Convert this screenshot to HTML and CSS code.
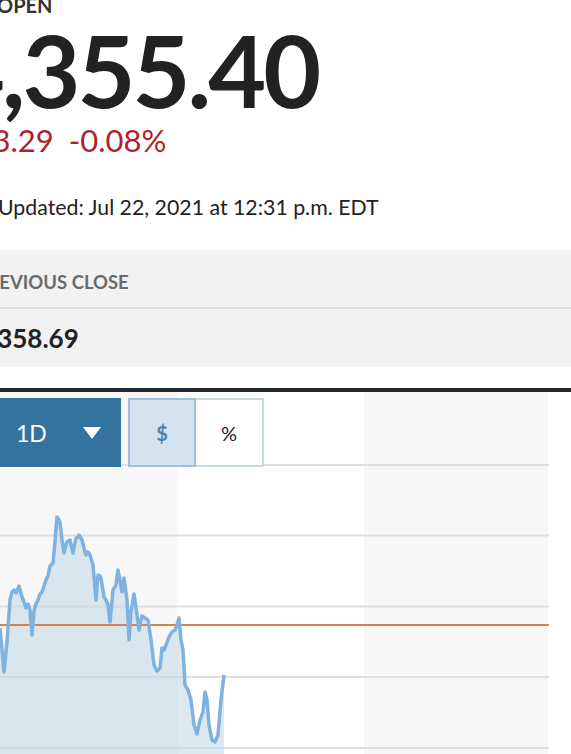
FILE: index.html
```html
<!DOCTYPE html>
<html lang="en">
<head>
<meta charset="utf-8">
<title>Quote</title>
<link rel="stylesheet" href="styles.css">
</head>
<body>
<section class="quote">
  <div class="status">OPEN</div>
  <div class="price">4,355.40</div>
  <div class="change"><span>-3.29</span><span>-0.08%</span></div>
  <div class="updated">Updated: Jul 22, 2021 at 12:31 p.m. EDT</div>
</section>
<section class="prev">
  <div class="prev-label">PREVIOUS CLOSE</div>
  <div class="prev-value">4,358.69</div>
</section>
<section class="chart">
  <svg class="chart-svg" width="571" height="362" viewBox="0 0 571 362">
    <rect x="0" y="0" width="178" height="362" fill="#f7f7f7"/>
    <rect x="364" y="0" width="184" height="362" fill="#f7f7f7"/>
    <g stroke="#dfdfdf" stroke-width="2">
      <line x1="0" y1="73" x2="549" y2="73"/>
      <line x1="0" y1="143.5" x2="549" y2="143.5"/>
      <line x1="0" y1="214.5" x2="549" y2="214.5"/>
      <line x1="0" y1="285" x2="549" y2="285"/>
      <line x1="0" y1="356" x2="549" y2="356"/>
    </g>
    <path fill="#c5dbe6" fill-opacity="0.6" d="M0,236 L4,280 L7,250 L10,208 L12,200 L14,198 L16,201 L19,194 L22,205 L24,210 L26,216 L28,212 L30,218 L32,243 L34,219 L36,212 L38,208 L40,202 L42,200 L44,194 L46,188 L48,184 L50,174 L53,171 L55,150 L57,125 L59,128 L60,130 L62,148 L64,161 L66,152 L67,150 L70,148 L73,161 L76,146 L78,145 L79,143 L82,148 L84,156 L86,163 L88,160 L90,163 L93,173 L96,208 L98,183 L100,184 L101,186 L104,205 L106,208 L108,213 L110,230 L112,210 L113,198 L116,193 L118,178 L120,188 L122,200 L124,186 L127,208 L129,248 L131,220 L134,202 L136,216 L139,238 L141,228 L142,224 L145,226 L148,228 L151,248 L154,273 L157,279 L160,276 L162,256 L164,258 L166,253 L169,245 L172,240 L175,238 L177,233 L179,226 L181,248 L183,258 L185,293 L188,298 L191,308 L194,333 L197,342 L200,328 L203,320 L205,300 L207,308 L209,333 L212,348 L215,350 L218,343 L221,308 L224,283 L224,362 L0,362 Z"/>
    <line x1="0" y1="233" x2="549" y2="233" stroke="#d4834e" stroke-width="2"/>
    <path fill="none" stroke="#7fb2de" stroke-width="3.5" stroke-linejoin="round" d="M0,236 L4,280 L7,250 L10,208 L12,200 L14,198 L16,201 L19,194 L22,205 L24,210 L26,216 L28,212 L30,218 L32,243 L34,219 L36,212 L38,208 L40,202 L42,200 L44,194 L46,188 L48,184 L50,174 L53,171 L55,150 L57,125 L59,128 L60,130 L62,148 L64,161 L66,152 L67,150 L70,148 L73,161 L76,146 L78,145 L79,143 L82,148 L84,156 L86,163 L88,160 L90,163 L93,173 L96,208 L98,183 L100,184 L101,186 L104,205 L106,208 L108,213 L110,230 L112,210 L113,198 L116,193 L118,178 L120,188 L122,200 L124,186 L127,208 L129,248 L131,220 L134,202 L136,216 L139,238 L141,228 L142,224 L145,226 L148,228 L151,248 L154,273 L157,279 L160,276 L162,256 L164,258 L166,253 L169,245 L172,240 L175,238 L177,233 L179,226 L181,248 L183,258 L185,293 L188,298 L191,308 L194,333 L197,342 L200,328 L203,320 L205,300 L207,308 L209,333 L212,348 L215,350 L218,343 L221,308 L224,283"/>
  </svg>
  <div class="toolbar">
    <button class="range" type="button"><span>1D</span>
      <svg class="caret" width="18" height="12" viewBox="0 0 18 12"><path d="M0,0 L18,0 L9,12 Z" fill="#fff"/></svg>
    </button>
    <div class="toggle">
      <button class="tg tg-active" type="button">$</button>
      <button class="tg" type="button">%</button>
    </div>
  </div>
</section>
</body>
</html>
```
FILE: styles.css
```css
html, body {
  margin: 0;
  padding: 0;
  background: #fff;
  overflow: hidden;
}
body {
  width: 571px;
  height: 754px;
  font-family: Lato, "Open Sans", sans-serif;
  color: #222;
}
.quote {
  margin-left: -24px;
  display: flex;
  flex-direction: column;
  align-items: flex-start;
}
.status {
  margin-top: -7px;
  margin-left: 21px;
  font-size: 20px;
  line-height: 24px;
  font-weight: 700;
  color: #333;
}
.price {
  margin-top: 2px;
  margin-left: -29px;
  font-size: 100px;
  line-height: 100px;
  font-weight: 700;
  letter-spacing: -3px;
  color: #222;
}
.change {
  display: flex;
  gap: 15px;
  margin-top: 4px;
  margin-left: 5px;
  font-size: 31px;
  line-height: 34px;
  color: #b31e2b;
}
.updated {
  margin-top: 37px;
  margin-left: 22px;
  font-size: 21.3px;
  line-height: 26px;
  color: #222;
}
.prev {
  margin-top: 30px;
  margin-left: -24px;
  background: #f2f2f2;
  display: flex;
  flex-direction: column;
}
.prev-label {
  height: 59px;
  box-sizing: border-box;
  padding-top: 7px;
  display: flex;
  align-items: center;
  font-size: 18.5px;
  font-weight: 700;
  color: #6b6b6b;
  border-bottom: 2px solid #dcdcdc;
}
.prev-value {
  height: 58px;
  display: flex;
  align-items: center;
  font-size: 26px;
  font-weight: 700;
  color: #222;
}
.chart {
  margin-top: 21px;
  border-top: 4px solid #24292c;
  position: relative;
}
.chart-svg {
  display: block;
}
.toolbar {
  position: absolute;
  top: 6px;
  left: 0;
  display: flex;
  gap: 7px;
}
.range {
  width: 121px;
  height: 69px;
  border: 0;
  margin: 0;
  padding: 0 20px 0 16px;
  background: #35739f;
  color: #fff;
  font-family: Lato, sans-serif;
  font-size: 23px;
  display: flex;
  align-items: center;
  justify-content: space-between;
}
.caret {
  display: block;
}
.toggle {
  display: flex;
}
.tg {
  width: 68px;
  height: 69px;
  margin: 0;
  padding: 0;
  border: 2px solid #c9d9e6;
  background: #fff;
  color: #222;
  font-family: Lato, sans-serif;
  font-size: 20px;
}
.tg + .tg {
  border-left: 0;
}
.tg-active {
  background: #d5e3ee;
  border-color: #a6bed6;
  color: #4b81b1;
  font-weight: 700;
}
```
